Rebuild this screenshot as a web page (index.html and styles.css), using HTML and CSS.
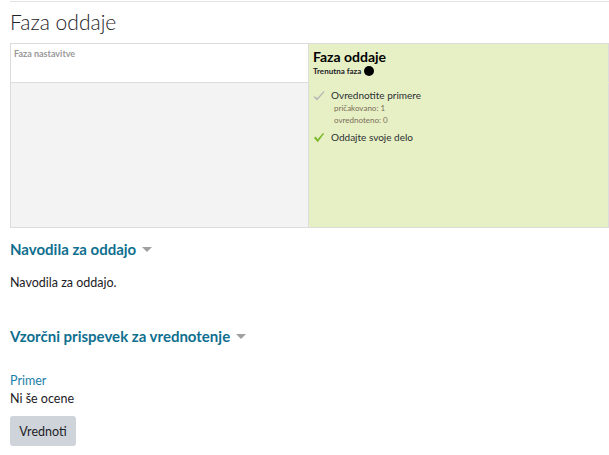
FILE: index.html
```html
<!DOCTYPE html>
<html lang="sl">
<head>
<meta charset="utf-8">
<title>Faza oddaje</title>
<link rel="stylesheet" href="styles.css">
</head>
<body>
<div class="page">
  <h2 class="title">Faza oddaje</h2>
  <div class="plan-wrap">
    <table class="userplan">
      <tr>
        <th class="phase first"><div class="cell-in"><span class="phase-name">Faza nastavitve</span></div></th>
        <th class="phase active">
          <div class="cell-in cell-active">
            <span class="phase-title">Faza oddaje</span>
            <span class="current">Trenutna faza <span class="dot"></span></span>
          </div>
        </th>
        <th class="phase"></th>
        <th class="phase"></th>
        <th class="phase"></th>
      </tr>
      <tr>
        <td class="tasks"></td>
        <td class="tasks active">
          <ul class="tasklist">
            <li class="task">
              <div class="task-row">
                <svg class="ico" viewBox="0 0 12 10" aria-hidden="true"><path d="M1 6 L4 9 L11 1" fill="none" stroke="#b8b8b8" stroke-width="1.2"/><path d="M2 7.5 L6 7.5" stroke="#b8b8b8" stroke-width="1"/></svg>
                <span>Ovrednotite primere</span>
              </div>
              <div class="details">pričakovano: 1</div>
              <div class="details">ovrednoteno: 0</div>
            </li>
            <li class="task">
              <div class="task-row">
                <svg class="ico" viewBox="0 0 12 12" aria-hidden="true"><path d="M0.5 6.5 L2.5 5 L4.5 8 L10.5 0.8 L11.5 1.8 L4.6 11.3 Z" fill="#7cb92c"/></svg>
                <span>Oddajte svoje delo</span>
              </div>
            </li>
          </ul>
        </td>
        <td class="tasks"></td>
        <td class="tasks"></td>
        <td class="tasks"></td>
      </tr>
    </table>
  </div>

  <h3 class="section">Navodila za oddajo <span class="caret"></span></h3>
  <p class="text">Navodila za oddajo.</p>

  <h3 class="section section-2">Vzorčni prispevek za vrednotenje <span class="caret"></span></h3>
  <div class="example">
    <a class="link" href="#">Primer</a>
    <div class="text">Ni še ocene</div>
    <button class="btn" type="button">Vrednoti</button>
  </div>
</div>
</body>
</html>
```

FILE: styles.css
```css
html, body {
  margin: 0;
  padding: 0;
  background: #fff;
  overflow: hidden;
}
body {
  font-family: Lato, "Open Sans", "Liberation Sans", sans-serif;
  color: #1d2125;
}
.page {
  margin-left: 10px;
  border-top: 1px solid #e3e3e3;
  margin-top: 1px;
}
.title {
  margin: 0;
  padding-top: 7px;
  height: 34px;
  font-weight: 300;
  font-size: 21px;
  line-height: 26px;
  color: #1d2125;
}
.plan-wrap {
  width: 599px;
  overflow: hidden;
}
.userplan {
  border-collapse: collapse;
  table-layout: fixed;
  width: 1493px;
}
.userplan th, .userplan td {
  width: 299px;
  border: 1px solid #dcdcdc;
  vertical-align: top;
  text-align: left;
  padding: 0;
}
.userplan th.first {
  width: 297px;
}
.userplan th {
  height: 38px;
  background: #fff;
}
.userplan td {
  height: 144px;
  background: #f3f3f3;
}
.userplan th.active {
  background: #e7f0c5;
  border-bottom-color: #e7f0c5;
}
.userplan td.active {
  background: #e7f0c5;
  border-top-color: #e7f0c5;
}
.cell-in {
  padding: 4px 3px;
}
.cell-active {
  padding: 4px 4px;
}
.phase-name {
  font-size: 9px;
  font-weight: 700;
  color: #9a9a9a;
  display: block;
  line-height: 12px;
}
.phase-title {
  display: block;
  font-size: 14px;
  font-weight: 700;
  color: #000;
  line-height: 17px;
}
.current {
  display: flex;
  align-items: center;
  gap: 3px;
  font-size: 8px;
  font-weight: 700;
  color: #1d2125;
  line-height: 12px;
}
.dot {
  display: inline-block;
  width: 10px;
  height: 10px;
  border-radius: 50%;
  background: #000;
}
.tasklist {
  list-style: none;
  margin: 0;
  padding: 6px 4px 0 4px;
}
.task {
  margin-bottom: 5px;
}
.task-row {
  display: flex;
  align-items: center;
  gap: 6px;
  font-size: 10px;
  line-height: 13px;
  color: #2a2e33;
}
.ico {
  width: 12px;
  height: 11px;
  flex: none;
}
.details {
  font-size: 8px;
  line-height: 12px;
  color: #7a6e5a;
  padding-left: 21px;
}
.section {
  margin: 11px 0 0;
  font-size: 15px;
  font-weight: 700;
  line-height: 20px;
  color: #0f6f8f;
  display: flex;
  align-items: center;
  gap: 6px;
}
.caret {
  display: inline-block;
  width: 0;
  height: 0;
  border-left: 5px solid transparent;
  border-right: 5px solid transparent;
  border-top: 5px solid #a0a0a0;
}
.text {
  font-size: 12.5px;
  line-height: 18px;
  margin: 0;
  color: #1d2125;
}
p.text {
  margin-top: 15px;
}
.section-2 {
  margin-top: 34px;
}
.example {
  margin-top: 26px;
}
.link {
  display: block;
  font-size: 12.5px;
  line-height: 18px;
  color: #1a7ea8;
  text-decoration: none;
}
.btn {
  margin-top: 8px;
  font-family: inherit;
  font-size: 12.5px;
  color: #1d2125;
  background: #ced4da;
  border: none;
  border-radius: 3px;
  width: 66px;
  height: 30px;
  padding: 0;
}
```
